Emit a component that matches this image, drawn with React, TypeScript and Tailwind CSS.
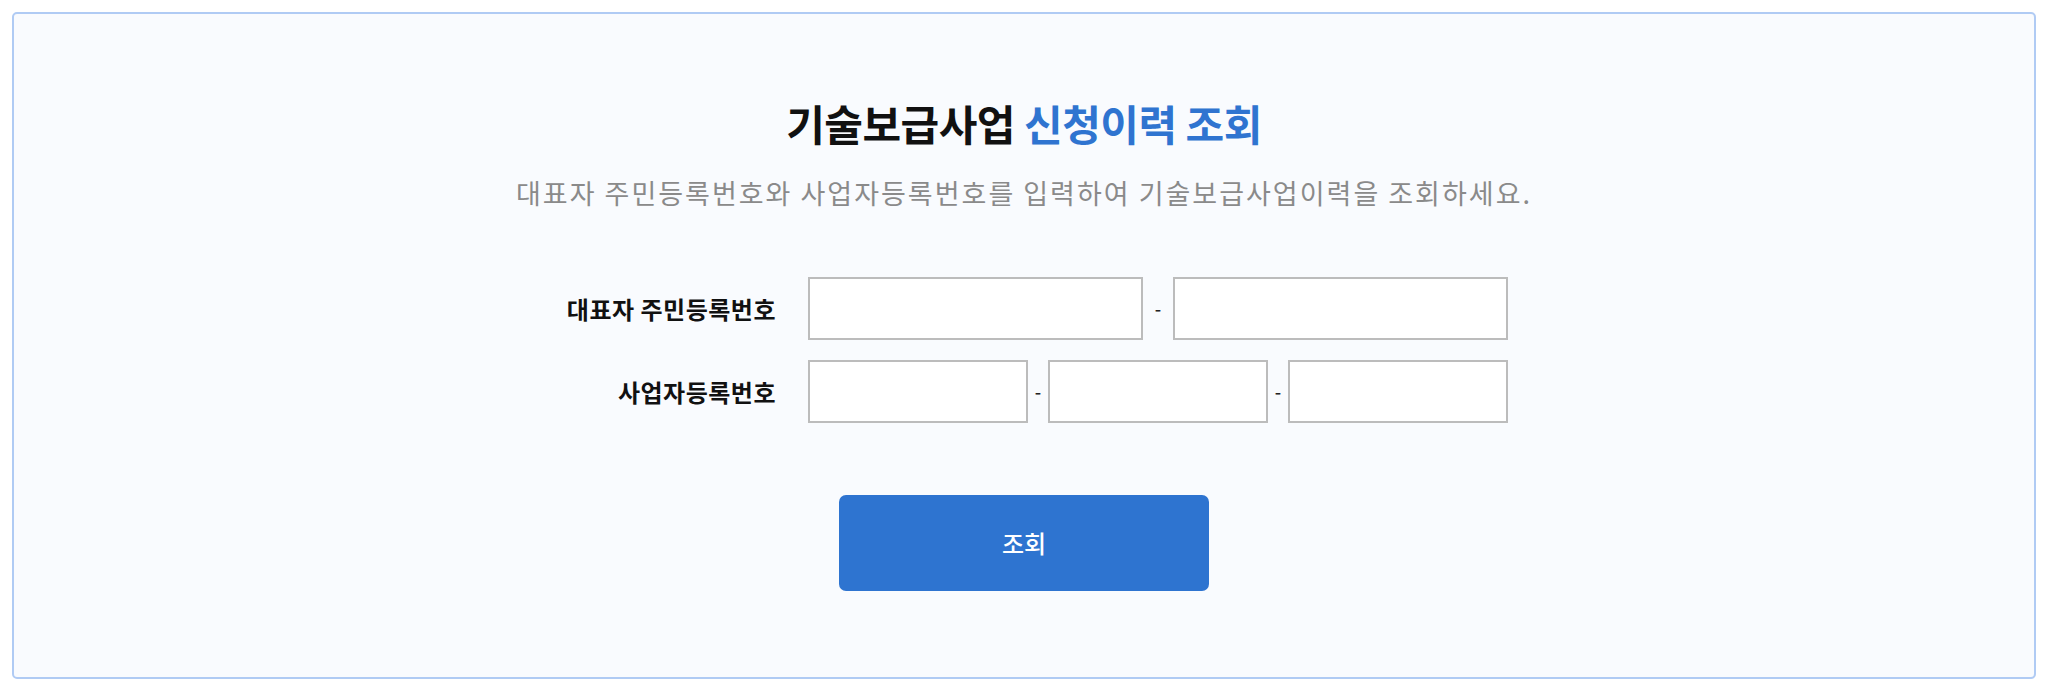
export default function App() {
  const font = { fontFamily: '"Noto Sans CJK KR", "Noto Sans", sans-serif' };

  return (
    <div className="min-h-screen bg-white p-[12px] pt-[12px]" style={font}>
      <div className="h-[667px] rounded-[5px] border-[2.5px] border-[#b0cbf4] bg-[#f9fbfe] flex flex-col items-center pt-[84px]">
        <h1 className="text-[42px] leading-[50px] font-bold text-[#111] tracking-[-0.5px]">
          기술보급사업 <span className="text-[#2f74d0]">신청이력 조회</span>
        </h1>
        <p className="mt-[27px] text-[27px] leading-[36px] text-[#8a8a8a] tracking-[2px]">
          대표자 주민등록번호와 사업자등록번호를 입력하여 기술보급사업이력을 조회하세요.
        </p>

        <div className="mt-[66px] grid grid-cols-[236px_700px] gap-x-[32px] gap-y-[20px] items-center">
          <label className="text-right text-[24px] font-bold text-[#111] tracking-[0.5px]">대표자 주민등록번호</label>
          <div className="flex items-center">
            <input className="w-[335px] h-[63px] border-2 border-[#bcbcbc] bg-white outline-none" />
            <span className="w-[30px] text-center text-[18px] font-medium text-[#222]">-</span>
            <input className="w-[335px] h-[63px] border-2 border-[#bcbcbc] bg-white outline-none" />
          </div>

          <label className="text-right text-[24px] font-bold text-[#111] tracking-[0.5px]">사업자등록번호</label>
          <div className="flex items-center">
            <input className="w-[220px] h-[63px] border-2 border-[#bcbcbc] bg-white outline-none" />
            <span className="w-[20px] text-center text-[18px] font-medium text-[#222]">-</span>
            <input className="w-[220px] h-[63px] border-2 border-[#bcbcbc] bg-white outline-none" />
            <span className="w-[20px] text-center text-[18px] font-medium text-[#222]">-</span>
            <input className="w-[220px] h-[63px] border-2 border-[#bcbcbc] bg-white outline-none" />
          </div>
        </div>

        <button className="mt-[72px] w-[370px] h-[96px] rounded-[7px] bg-[#2e74d0] text-white text-[24px] font-medium">
          조회
        </button>
      </div>
    </div>
  );
}
